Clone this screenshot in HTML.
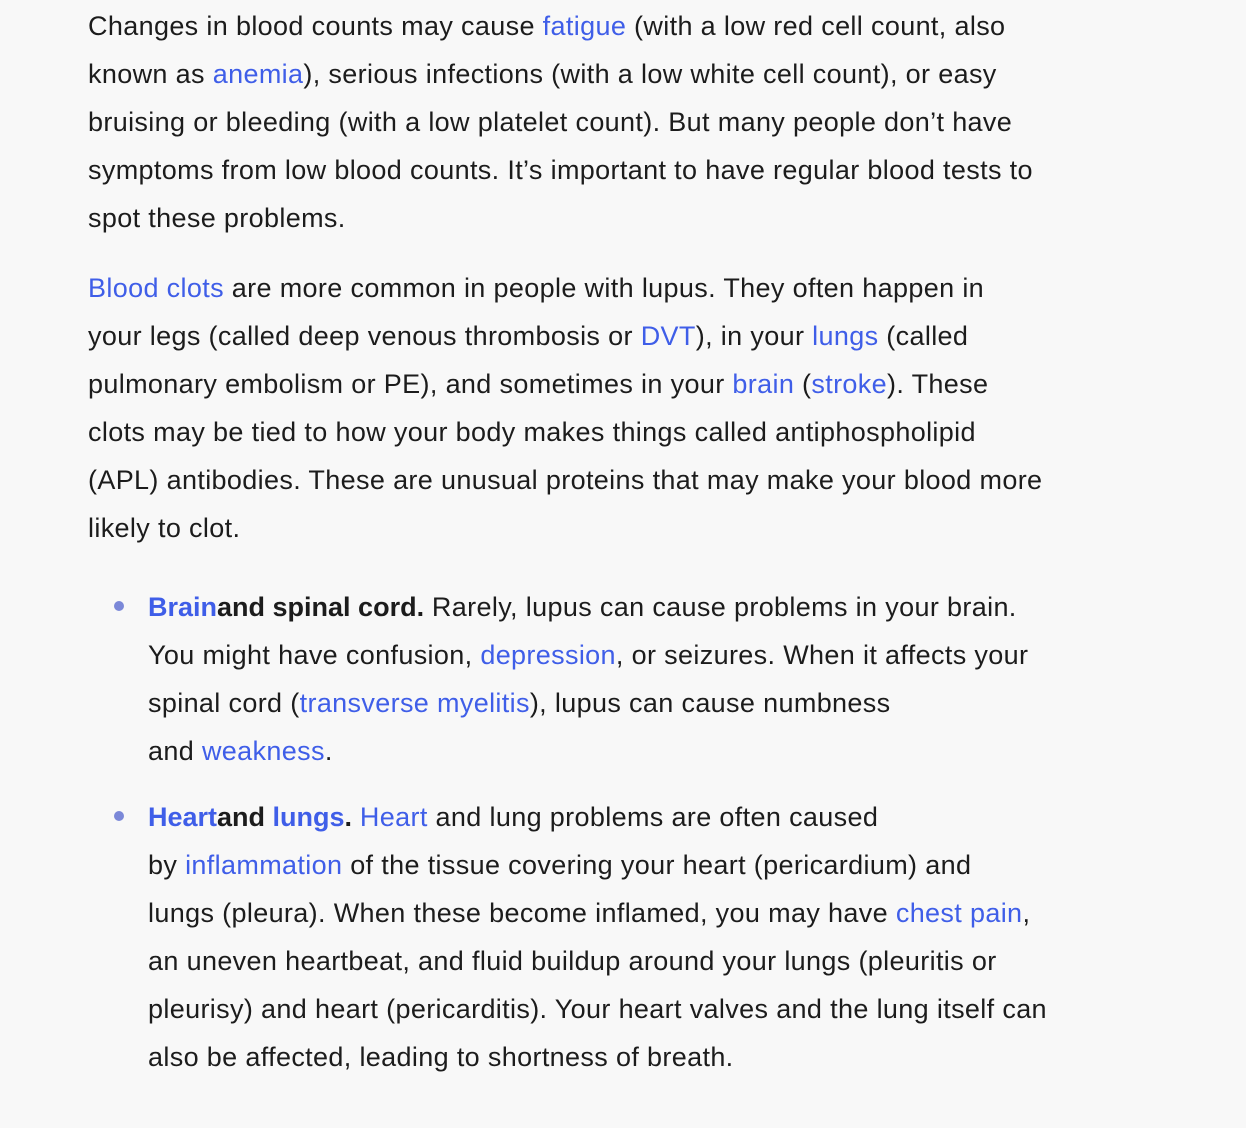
<!DOCTYPE html>
<html><head><meta charset="utf-8"><style>
html,body{margin:0;padding:0;background:#f8f8f8;width:1246px;height:1128px;overflow:hidden}
body{font-family:"Liberation Sans",sans-serif;font-size:27px;letter-spacing:0.35px;color:#1c1c1c;position:relative}
.p{position:absolute;left:88px;line-height:48px;white-space:nowrap}
.li{left:148px}
a{color:#3f5ee8;text-decoration:none}
b{font-weight:bold;letter-spacing:0}
.dot{position:absolute;left:114px;width:10px;height:10px;border-radius:50%;background:#7b88d8}
</style></head><body>
<div class="p" style="top:2px">
Changes in blood counts may cause <a>fatigue</a> (with a low red cell count, also<br>
known as <a>anemia</a>), serious infections (with a low white cell count), or easy<br>
bruising or bleeding (with a low platelet count). But many people don’t have<br>
symptoms from low blood counts. It’s important to have regular blood tests to<br>
spot these problems.
</div>
<div class="p" style="top:264px">
<a>Blood clots</a> are more common in people with lupus. They often happen in<br>
your legs (called deep venous thrombosis or <a>DVT</a>), in your <a>lungs</a> (called<br>
pulmonary embolism or PE), and sometimes in your <a>brain</a> (<a>stroke</a>). These<br>
clots may be tied to how your body makes things called antiphospholipid<br>
(APL) antibodies. These are unusual proteins that may make your blood more<br>
likely to clot.
</div>
<div class="dot" style="top:601px"></div>
<div class="p li" style="top:583px">
<b><a>Brain</a>and spinal cord.</b> Rarely, lupus can cause problems in your brain.<br>
You might have confusion, <a>depression</a>, or seizures. When it affects your<br>
spinal cord (<a>transverse myelitis</a>), lupus can cause numbness<br>
and <a>weakness</a>.
</div>
<div class="dot" style="top:811px"></div>
<div class="p li" style="top:793px">
<b><a>Heart</a>and <a>lungs</a>.</b> <a>Heart</a> and lung problems are often caused<br>
by <a>inflammation</a> of the tissue covering your heart (pericardium) and<br>
lungs (pleura). When these become inflamed, you may have <a>chest pain</a>,<br>
an uneven heartbeat, and fluid buildup around your lungs (pleuritis or<br>
pleurisy) and heart (pericarditis). Your heart valves and the lung itself can<br>
also be affected, leading to shortness of breath.
</div>
</body></html>
